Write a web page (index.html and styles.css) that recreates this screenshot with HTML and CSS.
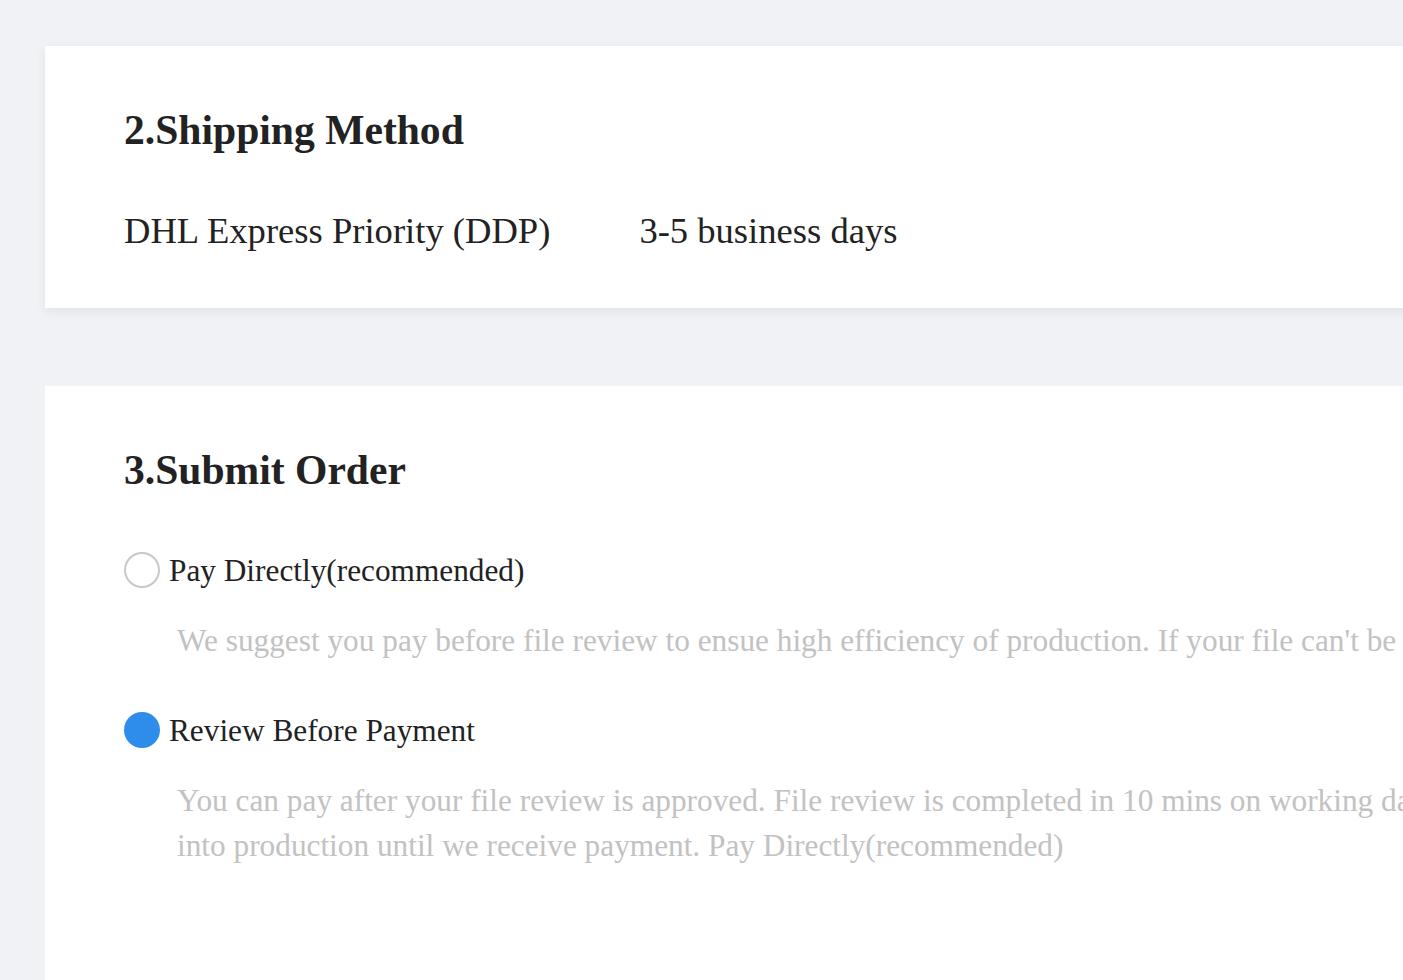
FILE: index.html
```html
<!DOCTYPE html>
<html lang="en">
<head>
<meta charset="utf-8">
<title>Checkout</title>
<link rel="stylesheet" href="styles.css">
</head>
<body>
<main class="page">
  <section class="card card-shipping">
    <h2 class="card-title">2.Shipping Method</h2>
    <div class="ship-row">
      <span class="ship-name">DHL Express Priority (DDP)</span>
      <span class="ship-time">3-5 business days</span>
    </div>
  </section>

  <section class="card card-submit">
    <h2 class="card-title">3.Submit Order</h2>
    <div class="option">
      <div class="radio-row">
        <span class="radio"></span>
        <span class="radio-label">Pay Directly(recommended)</span>
      </div>
      <p class="desc">We suggest you pay before file review to ensue high efficiency of production. If your file can't be produced, we will refund you in full.</p>
    </div>
    <div class="option">
      <div class="radio-row">
        <span class="radio radio-checked"></span>
        <span class="radio-label">Review Before Payment</span>
      </div>
      <p class="desc">You can pay after your file review is approved. File review is completed in 10 mins on working days, and your order won't go<br>into production until we receive payment. Pay Directly(recommended)</p>
    </div>
  </section>
</main>
</body>
</html>
```

FILE: styles.css
```css
html, body {
  margin: 0;
  padding: 0;
  overflow: hidden;
  background: #f0f2f5;
}

body {
  font-family: "Liberation Serif", "Times New Roman", serif;
  color: #222222;
  width: 1403px;
  height: 980px;
}

.page {
  display: flex;
  flex-direction: column;
  gap: 78px;
  padding: 46px 0 0 45px;
  width: 1700px;
}

.card {
  background: #ffffff;
  padding: 60px 78px 56px 79px;
  box-shadow: 0 4px 10px rgba(40, 50, 90, 0.07);
}

.card-submit {
  min-height: 700px;
  box-shadow: none;
}

.card-title {
  margin: 0;
  font-size: 41.6px;
  font-weight: bold;
  line-height: normal;
  color: #222222;
}

.ship-row {
  display: flex;
  gap: 89px;
  margin-top: 55px;
  font-size: 36.6px;
  line-height: normal;
  color: #222222;
}

.option:first-of-type {
  margin-top: 58px;
}

.radio-row {
  display: flex;
  align-items: center;
  gap: 9px;
  height: 36px;
}

.radio {
  box-sizing: border-box;
  width: 36px;
  height: 36px;
  border-radius: 50%;
  border: 2px solid #c8c8c8;
  background: #ffffff;
  flex: none;
}

.radio-checked {
  border: none;
  background: #2e8ceb;
}

.radio-label {
  margin-top: 1px;
  font-size: 31.3px;
  line-height: normal;
  color: #222222;
}

.desc {
  margin: 30px 0 49px 53px;
  font-size: 31.3px;
  line-height: 45px;
  color: #c2c2c2;
  white-space: nowrap;
}
```
